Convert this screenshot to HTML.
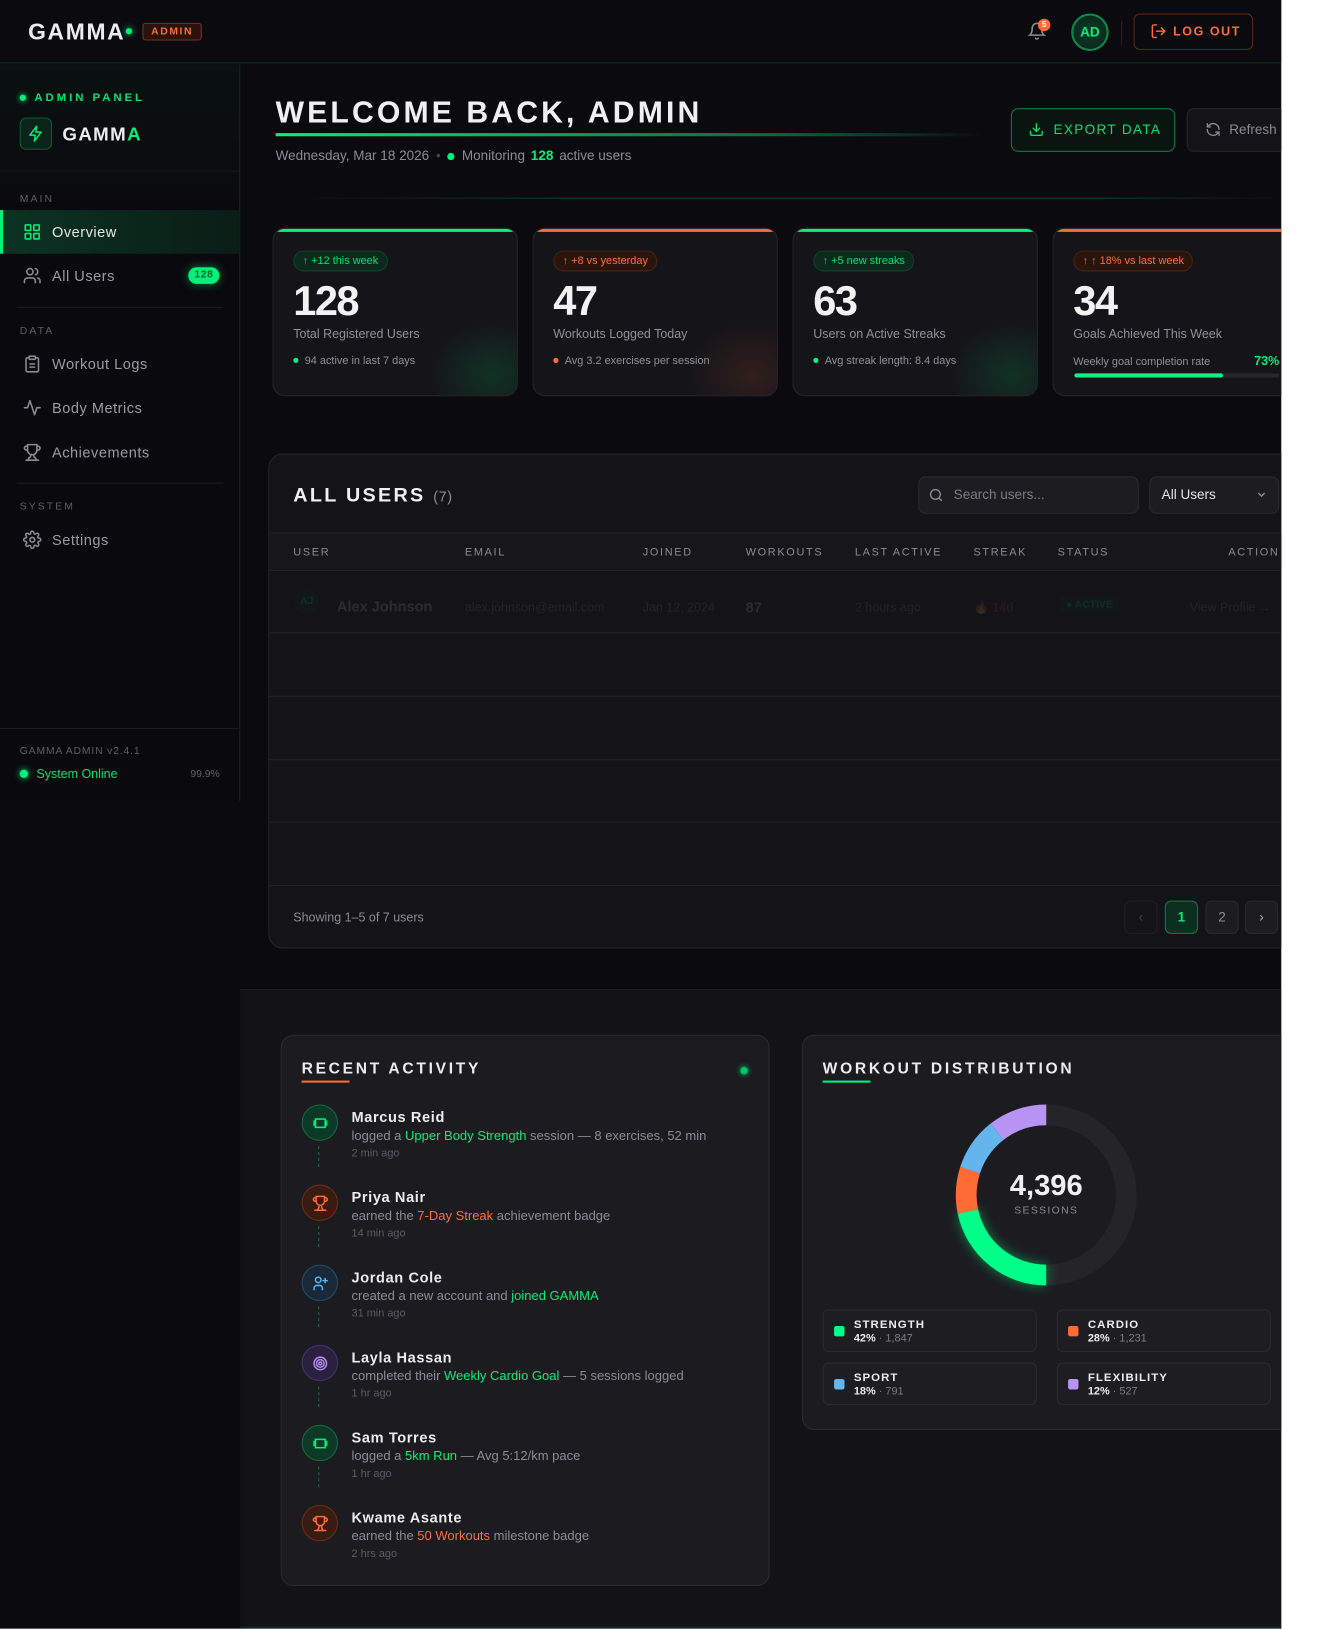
<!DOCTYPE html>
<html><head><meta charset="utf-8">
<style>
*{box-sizing:border-box;margin:0;padding:0}
html,body{width:1331px;height:1629px;overflow:hidden;background:#fff;font-family:"Liberation Sans",sans-serif}
#wrap{position:absolute;left:0;top:0;width:1280px;height:1566px;transform:scale(1.04);transform-origin:0 0}
#dark{position:absolute;left:0;top:0;width:1232px;height:1566px;background:#0b0b0f;overflow:hidden}
.abs{position:absolute}
.g{color:#00f07c}.o{color:#ff6b35}
.hdr{left:0;top:0;width:1232px;height:61px;border-bottom:1px solid #0f2a1e;background:#0b0b0f}
.side{left:0;top:62px;width:231px;height:708px;border-right:1px solid #0f2a1e;background:linear-gradient(180deg,#0a1110 0,#0a0a0e 20%)}
.lbl{font-size:10px;letter-spacing:2px;color:#5c5c66}
.nav{position:absolute;left:0;width:230px;height:42px;display:flex;align-items:center;padding-left:22px;font-size:14px;color:#9a9aa4;letter-spacing:.5px}
.nav svg{margin-right:10px}
.card{position:absolute;top:219px;width:236px;height:162px;background:#151519;border:1px solid #24242a;border-radius:12px;overflow:hidden}
.card .bar{position:absolute;left:0;top:0;right:0;height:3px}
.card .pill{position:absolute;left:19px;top:21px;height:20px;padding:0 8px;border-radius:10px;font-size:10.5px;line-height:19px}
.card .num{position:absolute;left:19px;top:48px;font-size:40px;font-weight:bold;color:#f2f2f2;letter-spacing:-1.5px}
.card .lab{position:absolute;left:19px;top:94px;font-size:12px;color:#8f8f99}
.card .ft{position:absolute;left:19px;top:121px;font-size:10.5px;color:#8f8f99}
.dot{display:inline-block;width:5px;height:5px;border-radius:50%;margin-right:6px;vertical-align:1px}
.th{position:absolute;top:525px;font-size:10.5px;letter-spacing:1.6px;color:#8a8a94}
.rowl{position:absolute;left:259px;width:980px;height:1px;background:#222228}
.pg{position:absolute;top:866px;width:32px;height:32px;border-radius:6px;border:1px solid #2a2a31;background:#1c1c21;color:#8a8a94;font-size:13px;text-align:center;line-height:30px}
.act{position:absolute;left:290px}
.act .ic{position:absolute;left:0;top:0;width:35px;height:35px;border-radius:50%;display:flex;align-items:center;justify-content:center}
.act .ln{position:absolute;left:16px;top:40px;width:0;height:20px;border-left:1.5px dashed #1f6b43}
.act .nm{position:absolute;left:48px;top:4px;font-size:14px;font-weight:bold;color:#ececef;letter-spacing:.6px;white-space:nowrap}
.act .ds{position:absolute;left:48px;top:23px;font-size:12.5px;color:#8c8c96;white-space:nowrap}
.act .tm{position:absolute;left:48px;top:41px;font-size:10.5px;color:#5c5c66;white-space:nowrap}
.leg{position:absolute;width:206px;height:41px;border:1px solid #2a2a31;border-radius:6px;background:#1d1d22}
.leg i{position:absolute;left:10px;top:15px;width:10px;height:10px;border-radius:2px}
.leg b{position:absolute;left:29px;top:8px;font-size:11px;letter-spacing:1px;color:#ececef}
.leg span{position:absolute;left:29px;top:21px;font-size:10.5px;color:#7c7c86}
.leg span em{font-style:normal;font-weight:bold;color:#ececef}
</style></head><body>
<div id="wrap"><div id="dark">

<!-- header -->
<div class="abs hdr">
  <div class="abs" style="left:27px;top:18px;font-size:22px;font-weight:bold;letter-spacing:1.6px;color:#ececef">GAMMA</div>
  <div class="abs" style="left:121px;top:27px;width:6px;height:6px;border-radius:50%;background:#00f07c;box-shadow:0 0 6px #00f07c"></div>
  <div class="abs" style="left:137px;top:22px;width:57px;height:17px;border:1px solid #7a3319;border-radius:3px;background:#2a130b;color:#ff6b35;font-size:10px;font-weight:bold;letter-spacing:1.5px;text-align:center;line-height:15px">ADMIN</div>
  <svg class="abs" style="left:988px;top:21px" width="18" height="18" viewBox="0 0 24 24" fill="none" stroke="#8a8a94" stroke-width="2" stroke-linecap="round"><path d="M6 8a6 6 0 0 1 12 0c0 7 3 9 3 9H3s3-2 3-9"/><path d="M10.3 21a1.94 1.94 0 0 0 3.4 0"/></svg>
  <div class="abs" style="left:998px;top:18px;width:12px;height:12px;border-radius:50%;background:#ff6b35;color:#fff;font-size:8px;font-weight:bold;text-align:center;line-height:12px">5</div>
  <div class="abs" style="left:1030px;top:13px;width:36px;height:36px;border-radius:50%;border:2px solid #0b8a4c;background:radial-gradient(#0c3a26,#08241a);color:#00f07c;font-size:13px;font-weight:bold;text-align:center;line-height:32px">AD</div>
  <div class="abs" style="left:1078px;top:20px;width:1px;height:24px;background:#222"></div>
  <div class="abs" style="left:1090px;top:13px;width:115px;height:35px;border:1px solid #5a2a17;border-radius:6px;color:#ff6b35;font-size:12px;font-weight:bold;letter-spacing:1.5px;line-height:33px;padding-left:37px">LOG OUT</div>
  <svg class="abs" style="left:1106px;top:22px" width="16" height="16" viewBox="0 0 24 24" fill="none" stroke="#ff6b35" stroke-width="2" stroke-linecap="round" stroke-linejoin="round"><path d="M9 21H5a2 2 0 0 1-2-2V5a2 2 0 0 1 2-2h4"/><path d="M16 17l5-5-5-5"/><path d="M21 12H9"/></svg>
</div>

<!-- sidebar -->
<div class="abs side">
  <div class="abs" style="left:19px;top:29px;width:6px;height:6px;border-radius:50%;background:#00f07c;box-shadow:0 0 5px #00f07c"></div>
  <div class="abs" style="left:33px;top:26px;font-size:11px;font-weight:bold;letter-spacing:2.8px;color:#00e077">ADMIN PANEL</div>
  <div class="abs" style="left:19px;top:51px;width:31px;height:31px;border:1px solid #0f5a36;border-radius:6px;background:#0b2419"></div>
  <svg class="abs" style="left:26px;top:58px" width="17" height="17" viewBox="0 0 24 24" fill="none" stroke="#00f07c" stroke-width="2" stroke-linejoin="round"><path d="M13 2L4 14h7l-1 8 9-12h-7z"/></svg>
  <div class="abs" style="left:60px;top:57px;font-size:18px;font-weight:bold;letter-spacing:1.3px;color:#ececef">GAMM<span class="g">A</span></div>
  <div class="abs" style="left:0;top:102px;width:230px;height:1px;background:#14201b"></div>
  <div class="abs lbl" style="left:19px;top:124px">MAIN</div>
  <div class="nav" style="top:140px;background:linear-gradient(90deg,#0b3322,#0a1d16);border-left:3px solid #00f07c;padding-left:19px;color:#e6e6ea"><svg width="18" height="18" viewBox="0 0 24 24" fill="none" stroke="#00f07c" stroke-width="2"><rect x="3" y="3" width="7" height="7" rx="1"/><rect x="14" y="3" width="7" height="7" rx="1"/><rect x="3" y="14" width="7" height="7" rx="1"/><rect x="14" y="14" width="7" height="7" rx="1"/></svg>Overview</div>
  <div class="nav" style="top:182px"><svg width="18" height="18" viewBox="0 0 24 24" fill="none" stroke="#8a8a94" stroke-width="2" stroke-linecap="round"><path d="M16 21v-2a4 4 0 0 0-4-4H6a4 4 0 0 0-4 4v2"/><circle cx="9" cy="7" r="4"/><path d="M22 21v-2a4 4 0 0 0-3-3.870M16 3.13a4 4 0 0 1 0 7.75"/></svg>All Users
    <div class="abs" style="left:181px;top:13px;width:30px;height:16px;border-radius:8px;background:#00f07c;color:#062;font-size:10px;font-weight:bold;text-align:center;line-height:16px;box-shadow:0 0 8px rgba(0,240,124,.5)">128</div></div>
  <div class="abs" style="left:16px;top:233px;width:198px;height:1px;background:#1e1e24"></div>
  <div class="abs lbl" style="left:19px;top:251px">DATA</div>
  <div class="nav" style="top:267px"><svg width="18" height="18" viewBox="0 0 24 24" fill="none" stroke="#8a8a94" stroke-width="2" stroke-linecap="round"><rect x="8" y="2" width="8" height="4" rx="1"/><path d="M16 4h2a2 2 0 0 1 2 2v14a2 2 0 0 1-2 2H6a2 2 0 0 1-2-2V6a2 2 0 0 1 2-2h2"/><path d="M9 12h6M9 16h6"/></svg>Workout Logs</div>
  <div class="nav" style="top:309px"><svg width="18" height="18" viewBox="0 0 24 24" fill="none" stroke="#8a8a94" stroke-width="2" stroke-linecap="round" stroke-linejoin="round"><path d="M22 12h-4l-3 9L9 3l-3 9H2"/></svg>Body Metrics</div>
  <div class="nav" style="top:352px"><svg width="18" height="18" viewBox="0 0 24 24" fill="none" stroke="#8a8a94" stroke-width="2" stroke-linecap="round"><path d="M6 9H4.5a2.5 2.5 0 0 1 0-5H6M18 9h1.5a2.5 2.5 0 0 0 0-5H18M4 22h16M10 14.66V17c0 .55-.47.98-.97 1.21C7.85 18.75 7 20.24 7 22M14 14.66V17c0 .55.47.98.97 1.21C16.15 18.750 17 20.24 17 22M18 2H6v7a6 6 0 0 0 12 0V2z"/></svg>Achievements</div>
  <div class="abs" style="left:16px;top:402px;width:198px;height:1px;background:#1e1e24"></div>
  <div class="abs lbl" style="left:19px;top:420px">SYSTEM</div>
  <div class="nav" style="top:436px"><svg width="18" height="18" viewBox="0 0 24 24" fill="none" stroke="#8a8a94" stroke-width="2"><circle cx="12" cy="12" r="3"/><path d="M19.4 15a1.65 1.65 0 0 0 .33 1.82l.06.06a2 2 0 1 1-2.83 2.83l-.06-.06a1.65 1.65 0 0 0-2.82 1.17V21a2 2 0 1 1-4 0v-.09A1.65 1.65 0 0 0 9 19.4a1.65 1.65 0 0 0-1.82.33l-.06.06a2 2 0 1 1-2.830-2.83l.06-.06A1.65 1.65 0 0 0 3.18 14H3a2 2 0 1 1 0-4h.09A1.65 1.65 0 0 0 4.6 9a1.65 1.65 0 0 0-.33-1.82l-.06-.06a2 2 0 1 1 2.83-2.83l.06.06A1.65 1.65 0 0 0 10 3.18V3a2 2 0 1 1 4 0v.09a1.65 1.65 0 0 0 2.82 1.17l.06-.06a2 2 0 1 1 2.83 2.83l-.06.06A1.65 1.65 0 0 0 20.82 10H21a2 2 0 1 1 0 4h-.09a1.65 1.65 0 0 0-1.51 1z"/></svg>Settings</div>
  <div class="abs" style="left:0;top:638px;width:230px;height:1px;background:#14201b"></div>
  <div class="abs" style="left:19px;top:655px;font-size:10px;letter-spacing:.8px;color:#5c5c66">GAMMA ADMIN v2.4.1</div>
  <div class="abs" style="left:19px;top:678px;width:8px;height:8px;border-radius:50%;background:#00f07c;box-shadow:0 0 6px #00f07c"></div>
  <div class="abs" style="left:35px;top:675px;font-size:12px;color:#00e077">System Online</div>
  <div class="abs" style="left:183px;top:677px;font-size:10px;color:#5c5c66">99.9%</div>
</div>

<!-- welcome -->
<div class="abs" style="left:265px;top:93px;font-size:29px;font-weight:bold;letter-spacing:3px;color:#f0f0f2">WELCOME BACK, ADMIN</div>
<div class="abs" style="left:265px;top:128px;width:680px;height:3px;background:linear-gradient(90deg,#00f07c,#0b6b3d 70%,transparent)"></div>
<div class="abs" style="left:265px;top:142px;font-size:13px;color:#8a8a94;white-space:nowrap">Wednesday, Mar 18 2026 <span style="color:#444;margin:0 3px">•</span> <span class="dot" style="width:7px;height:7px;background:#00f07c;margin-right:3px;vertical-align:0"></span> Monitoring <b class="g" style="margin:0 2px">128</b> active users</div>
<div class="abs" style="left:972px;top:104px;width:158px;height:42px;border:1px solid #0d7a44;border-radius:7px;background:#0a1410;color:#00e077;font-size:13px;letter-spacing:1.3px;line-height:40px;padding-left:40px">EXPORT DATA</div>
<svg class="abs" style="left:989px;top:117px" width="15" height="15" viewBox="0 0 24 24" fill="none" stroke="#00e077" stroke-width="2" stroke-linecap="round"><path d="M21 15v4a2 2 0 0 1-2 2H5a2 2 0 0 1-2-2v-4M7 10l5 5 5-5M12 15V3"/></svg>
<div class="abs" style="left:1141px;top:104px;width:100px;height:42px;border:1px solid #26262c;border-radius:7px;background:#141418;color:#8a8a94;font-size:13px;line-height:40px;padding-left:40px">Refresh</div>
<svg class="abs" style="left:1159px;top:117px" width="15" height="15" viewBox="0 0 24 24" fill="none" stroke="#8a8a94" stroke-width="2" stroke-linecap="round"><path d="M21 12a9 9 0 0 0-15-6.7L3 8M3 3v5h5M3 12a9 9 0 0 0 15 6.7L21 16M21 21v-5h-5"/></svg>
<div class="abs" style="left:290px;top:190px;width:942px;height:1px;background:linear-gradient(90deg,transparent,#0e4a2e 30%,#0e4a2e 80%,transparent)"></div>

<!-- cards -->
<div class="card" style="left:262px"><div class="bar" style="background:#00f07c"></div>
  <div class="abs" style="left:150px;top:90px;width:120px;height:100px;background:radial-gradient(closest-side,rgba(0,200,100,.16),transparent)"></div>
  <div class="pill" style="background:#0b2a1c;border:1px solid #10432b;color:#00e077">↑ +12 this week</div>
  <div class="num">128</div><div class="lab">Total Registered Users</div>
  <div class="ft"><span class="dot" style="background:#00f07c"></span>94 active in last 7 days</div></div>
<div class="card" style="left:512px"><div class="bar" style="background:#ff6b35"></div>
  <div class="abs" style="left:150px;top:90px;width:120px;height:100px;background:radial-gradient(closest-side,rgba(255,107,53,.12),transparent)"></div>
  <div class="pill" style="background:#2a150d;border:1px solid #4a2414;color:#ff6b35">↑ +8 vs yesterday</div>
  <div class="num">47</div><div class="lab">Workouts Logged Today</div>
  <div class="ft"><span class="dot" style="background:#ff6b35"></span>Avg 3.2 exercises per session</div></div>
<div class="card" style="left:762px"><div class="bar" style="background:#00f07c"></div>
  <div class="abs" style="left:150px;top:90px;width:120px;height:100px;background:radial-gradient(closest-side,rgba(0,200,100,.16),transparent)"></div>
  <div class="pill" style="background:#0b2a1c;border:1px solid #10432b;color:#00e077">↑ +5 new streaks</div>
  <div class="num">63</div><div class="lab">Users on Active Streaks</div>
  <div class="ft"><span class="dot" style="background:#00f07c"></span>Avg streak length: 8.4 days</div></div>
<div class="card" style="left:1012px"><div class="bar" style="background:#ff6b35"></div>
  <div class="pill" style="background:#2a150d;border:1px solid #4a2414;color:#ff6b35">↑ ↑ 18% vs last week</div>
  <div class="num">34</div><div class="lab">Goals Achieved This Week</div>
  <div class="ft" style="top:122px">Weekly goal completion rate</div>
  <div class="abs g" style="left:193px;top:120px;font-size:12px;font-weight:bold">73%</div>
  <div class="abs" style="left:20px;top:139px;width:197px;height:4px;border-radius:2px;background:#26262b"><div style="width:143px;height:4px;border-radius:2px;background:#10f088"></div></div></div>

<!-- table -->
<div class="abs" style="left:258px;top:436px;width:990px;height:476px;background:#141418;border:1px solid #24242a;border-radius:14px"></div>
<div class="abs" style="left:282px;top:466px;font-size:19px;font-weight:bold;letter-spacing:2.2px;color:#f0f0f2">ALL USERS <span style="font-size:14px;font-weight:normal;letter-spacing:.5px;color:#8a8a94">(7)</span></div>
<div class="abs" style="left:883px;top:458px;width:212px;height:36px;border:1px solid #2a2a31;border-radius:7px;background:#1c1c21;color:#7c7c86;font-size:13px;line-height:34px;padding-left:33px">Search users...</div>
<svg class="abs" style="left:893px;top:469px" width="14" height="14" viewBox="0 0 24 24" fill="none" stroke="#8a8a94" stroke-width="2.2" stroke-linecap="round"><circle cx="11" cy="11" r="8"/><path d="M21 21l-4.3-4.3"/></svg>
<div class="abs" style="left:1105px;top:458px;width:125px;height:36px;border:1px solid #2a2a31;border-radius:7px;background:#1c1c21;color:#e6e6ea;font-size:13px;line-height:34px;padding-left:11px">All Users</div>
<svg class="abs" style="left:1208px;top:472px" width="10" height="8" viewBox="0 0 10 8" fill="none" stroke="#8a8a94" stroke-width="1.4"><path d="M2 2l3 3 3-3"/></svg>
<div class="rowl" style="top:512px"></div>
<div class="abs" style="left:259px;top:513px;width:980px;height:35px;background:#17171b"></div>
<div class="th" style="left:282px">USER</div><div class="th" style="left:447px">EMAIL</div><div class="th" style="left:618px">JOINED</div><div class="th" style="left:717px">WORKOUTS</div><div class="th" style="left:822px">LAST ACTIVE</div><div class="th" style="left:936px">STREAK</div><div class="th" style="left:1017px">STATUS</div><div class="th" style="left:1181px">ACTION</div>
<div class="rowl" style="top:548px"></div>
<div class="abs" style="left:259px;top:549px;width:980px;height:60px;opacity:.11;font-size:12px;color:#9a9aa4">
  <div class="abs" style="left:24px;top:18px;width:24px;height:24px;border-radius:50%;background:#0b3a24;color:#00f07c;font-size:10px;font-weight:bold;text-align:center;line-height:24px">AJ</div>
  <div class="abs" style="left:65px;top:26px;font-size:14px;font-weight:bold;color:#eee">Alex Johnson</div>
  <div class="abs" style="left:188px;top:28px">alex.johnson@email.com</div>
  <div class="abs" style="left:359px;top:28px">Jan 12, 2024</div>
  <div class="abs" style="left:458px;top:27px;font-size:14px;font-weight:bold;color:#eee">87</div>
  <div class="abs" style="left:563px;top:28px">2 hours ago</div>
  <div class="abs" style="left:677px;top:28px;color:#ff6b35">🔥 14d</div>
  <div class="abs" style="left:760px;top:25px;padding:2px 6px;background:#0b3a24;color:#00f07c;font-size:10px;font-weight:bold">● ACTIVE</div>
  <div class="abs" style="left:885px;top:28px">View Profile →</div>
</div>
<div class="rowl" style="top:608px"></div><div class="rowl" style="top:669px"></div><div class="rowl" style="top:730px"></div><div class="rowl" style="top:790px"></div><div class="rowl" style="top:851px"></div>
<div class="abs" style="left:282px;top:875px;font-size:12px;color:#8a8a94">Showing 1–5 of 7 users</div>
<div class="pg" style="left:1081px;background:#141418;border-color:#1e1e23;color:#44444c">‹</div>
<div class="pg" style="left:1120px;background:#0c3020;border-color:#0d7a44;color:#00f07c;font-weight:bold">1</div>
<div class="pg" style="left:1159px">2</div>
<div class="pg" style="left:1197px;color:#b0b0b8">›</div>

<!-- bottom section -->
<div class="abs" style="left:231px;top:951px;width:1001px;height:615px;background:#131317;border-top:1px solid #0f2a1e"></div>
<div class="abs" style="left:231px;top:1564px;width:1001px;height:2px;background:#0f2a1e"></div>

<div class="abs" style="left:270px;top:995px;width:470px;height:530px;background:#1b1b20;border:1px solid #2a2a31;border-radius:12px"></div>
<div class="abs" style="left:290px;top:1019px;font-size:15px;font-weight:bold;letter-spacing:2.6px;color:#ececef">RECENT ACTIVITY</div>
<div class="abs" style="left:290px;top:1039px;width:46px;height:2px;background:#ff6b35"></div>
<div class="abs" style="left:712px;top:1026px;width:7px;height:7px;border-radius:50%;background:#00c864;box-shadow:0 0 5px #00f07c"></div>

<div class="act" style="top:1062px"><div class="ic" style="background:#0d3a26;border:1px solid #126b40"><svg width="16" height="16" viewBox="0 0 24 24" fill="none" stroke="#00f07c" stroke-width="2.2"><rect x="5" y="6" width="14" height="12"/><path d="M3 8v8M21 8v8"/></svg></div><div class="ln"></div>
<div class="nm">Marcus Reid</div><div class="ds">logged a <span class="g">Upper Body Strength</span> session — 8 exercises, 52 min</div><div class="tm">2 min ago</div></div>
<div class="act" style="top:1139px"><div class="ic" style="background:#3a1b11;border:1px solid #6b2e18"><svg width="16" height="16" viewBox="0 0 24 24" fill="none" stroke="#ff6b35" stroke-width="2.2" stroke-linecap="round"><path d="M6 9H4.5a2.5 2.5 0 0 1 0-5H6M18 9h1.5a2.5 2.5 0 0 0 0-5H18M4 22h16M10 15v3l-2 4M14 15v3l2 4M18 2H6v7a6 6 0 0 0 12 0V2z"/></svg></div><div class="ln"></div>
<div class="nm">Priya Nair</div><div class="ds">earned the <span class="o">7-Day Streak</span> achievement badge</div><div class="tm">14 min ago</div></div>
<div class="act" style="top:1216px"><div class="ic" style="background:#182a3a;border:1px solid #2b4a66"><svg width="16" height="16" viewBox="0 0 24 24" fill="none" stroke="#5fb4ec" stroke-width="2.2" stroke-linecap="round"><circle cx="9" cy="7" r="4"/><path d="M3 21v-2a4 4 0 0 1 4-4h4a4 4 0 0 1 4 4v2M19 5v6M16 8h6"/></svg></div><div class="ln"></div>
<div class="nm">Jordan Cole</div><div class="ds">created a new account and <span class="g">joined GAMMA</span></div><div class="tm">31 min ago</div></div>
<div class="act" style="top:1293px"><div class="ic" style="background:#2a2040;border:1px solid #45366a"><svg width="16" height="16" viewBox="0 0 24 24" fill="none" stroke="#b48cf2" stroke-width="2.2"><circle cx="12" cy="12" r="9"/><circle cx="12" cy="12" r="5.5"/><circle cx="12" cy="12" r="2"/></svg></div><div class="ln"></div>
<div class="nm">Layla Hassan</div><div class="ds">completed their <span class="g">Weekly Cardio Goal</span> — 5 sessions logged</div><div class="tm">1 hr ago</div></div>
<div class="act" style="top:1370px"><div class="ic" style="background:#0d3a26;border:1px solid #126b40"><svg width="16" height="16" viewBox="0 0 24 24" fill="none" stroke="#00f07c" stroke-width="2.2"><rect x="5" y="6" width="14" height="12"/><path d="M3 8v8M21 8v8"/></svg></div><div class="ln"></div>
<div class="nm">Sam Torres</div><div class="ds">logged a <span class="g">5km Run</span> — Avg 5:12/km pace</div><div class="tm">1 hr ago</div></div>
<div class="act" style="top:1447px"><div class="ic" style="background:#3a1b11;border:1px solid #6b2e18"><svg width="16" height="16" viewBox="0 0 24 24" fill="none" stroke="#ff6b35" stroke-width="2.2" stroke-linecap="round"><path d="M6 9H4.5a2.5 2.5 0 0 1 0-5H6M18 9h1.5a2.5 2.5 0 0 0 0-5H18M4 22h16M10 15v3l-2 4M14 15v3l2 4M18 2H6v7a6 6 0 0 0 12 0V2z"/></svg></div>
<div class="nm">Kwame Asante</div><div class="ds">earned the <span class="o">50 Workouts</span> milestone badge</div><div class="tm">2 hrs ago</div></div>

<!-- distribution -->
<div class="abs" style="left:771px;top:995px;width:480px;height:380px;background:#1b1b20;border:1px solid #2a2a31;border-radius:12px"></div>
<div class="abs" style="left:791px;top:1019px;font-size:15px;font-weight:bold;letter-spacing:2.6px;color:#ececef">WORKOUT DISTRIBUTION</div>
<div class="abs" style="left:791px;top:1039px;width:46px;height:2px;background:#00f07c"></div>
<svg class="abs" style="left:906px;top:1049px" width="200" height="200" viewBox="0 0 200 200">
  <g transform="rotate(-90 100 100)" fill="none" stroke-width="20">
    <circle cx="100" cy="100" r="77" stroke="#252529"/>
    <circle cx="100" cy="100" r="77" stroke="#00ff88" stroke-dasharray="104.8 400" stroke-dashoffset="-241.9" style="filter:drop-shadow(0 0 6px rgba(0,240,124,.5))"/>
    <circle cx="100" cy="100" r="77" stroke="#ff6b35" stroke-dasharray="40.3 450" stroke-dashoffset="-346.7"/>
    <circle cx="100" cy="100" r="77" stroke="#64b5ec" stroke-dasharray="45.7 450" stroke-dashoffset="-387"/>
    <circle cx="100" cy="100" r="77" stroke="#b794f4" stroke-dasharray="51.1 450" stroke-dashoffset="-432.7"/>
  </g>
</svg>
<div class="abs" style="left:906px;top:1124px;width:200px;text-align:center;font-size:28px;font-weight:bold;color:#f0f0f2">4,396</div>
<div class="abs" style="left:906px;top:1159px;width:200px;text-align:center;font-size:10px;letter-spacing:1.3px;color:#8a8a94">SESSIONS</div>
<div class="leg" style="left:791px;top:1259px"><i style="background:#00ff88"></i><b>STRENGTH</b><span><em>42%</em> · 1,847</span></div>
<div class="leg" style="left:1016px;top:1259px"><i style="background:#ff6b35"></i><b>CARDIO</b><span><em>28%</em> · 1,231</span></div>
<div class="leg" style="left:791px;top:1310px"><i style="background:#64b5ec"></i><b>SPORT</b><span><em>18%</em> · 791</span></div>
<div class="leg" style="left:1016px;top:1310px"><i style="background:#b794f4"></i><b>FLEXIBILITY</b><span><em>12%</em> · 527</span></div>

</div></div>
</body></html>
